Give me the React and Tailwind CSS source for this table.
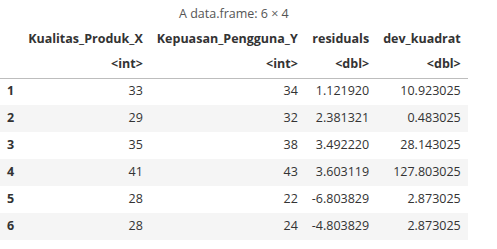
const rows = [
  ['1', '33', '34', '1.121920', '10.923025'],
  ['2', '29', '32', '2.381321', '0.483025'],
  ['3', '35', '38', '3.492220', '28.143025'],
  ['4', '41', '43', '3.603119', '127.803025'],
  ['5', '28', '22', '-6.803829', '2.873025'],
  ['6', '28', '24', '-4.803829', '2.873025'],
];

export default function App() {
  return (
    <div className="w-[497px] h-[249px] bg-white text-[#333] text-[12.5px]" style={{ fontFamily: '"Open Sans", "DejaVu Sans", sans-serif' }}>
      <table className="border-collapse">
        <caption className="h-[27px] leading-[27px] text-[12.5px] text-[#555] text-center">A data.frame: 6 × 4</caption>
        <thead>
          <tr className="h-[25px] font-bold">
            <th className="px-[7px]"></th>
            <th className="px-[7px] text-right">Kualitas_Produk_X</th>
            <th className="px-[7px] text-right">Kepuasan_Pengguna_Y</th>
            <th className="px-[7px] text-right">residuals</th>
            <th className="px-[7px] text-right">dev_kuadrat</th>
          </tr>
          <tr className="h-[26px] font-bold border-b border-[#bdbdbd]">
            <th className="px-[7px]"></th>
            <th className="px-[7px] text-right">&lt;int&gt;</th>
            <th className="px-[7px] text-right">&lt;int&gt;</th>
            <th className="px-[7px] text-right">&lt;dbl&gt;</th>
            <th className="px-[7px] text-right">&lt;dbl&gt;</th>
          </tr>
        </thead>
        <tbody>
          {rows.map((r, i) => (
            <tr key={r[0]} className={i % 2 === 1 ? 'h-[27px] bg-[#f5f5f5]' : 'h-[27px]'}>
              <th className="px-[7px] text-left font-bold">{r[0]}</th>
              <td className="px-[7px] text-right">{r[1]}</td>
              <td className="px-[7px] text-right">{r[2]}</td>
              <td className="px-[7px] text-right">{r[3]}</td>
              <td className="px-[7px] text-right">{r[4]}</td>
            </tr>
          ))}
        </tbody>
      </table>
    </div>
  );
}
